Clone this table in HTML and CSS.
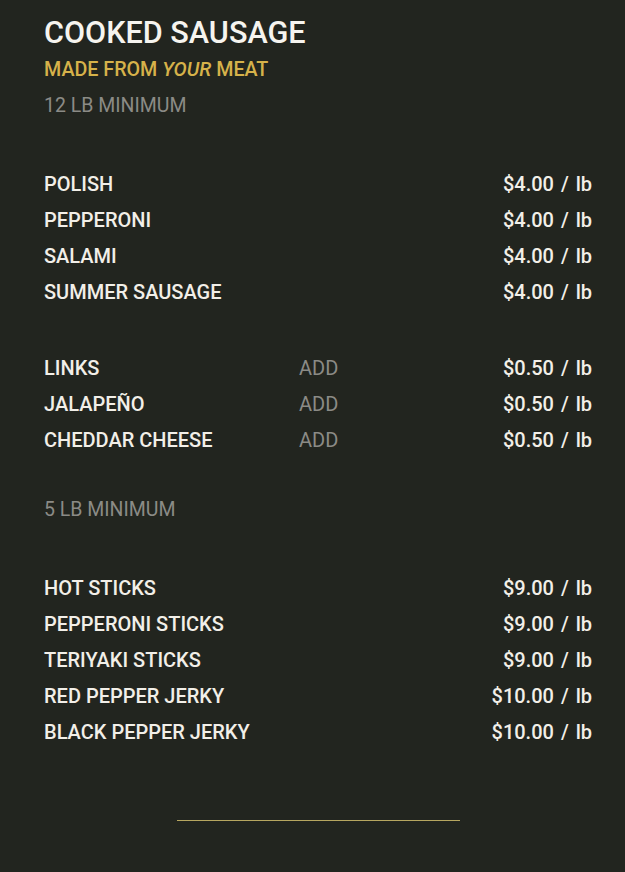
FILE: index.html
```html
<!DOCTYPE html>
<html>
<head>
<meta charset="utf-8">
<link rel="stylesheet" href="styles.css">
</head>
<body>
<main class="menu">
  <header class="head">
    <h1 class="title">COOKED SAUSAGE</h1>
    <p class="sub">MADE FROM <em>YOUR</em> MEAT</p>
    <p class="min">12 LB MINIMUM</p>
  </header>

  <ul class="list first">
    <li class="row"><span class="name">POLISH</span><span class="price">$4.00 / lb</span></li>
    <li class="row"><span class="name">PEPPERONI</span><span class="price">$4.00 / lb</span></li>
    <li class="row"><span class="name">SALAMI</span><span class="price">$4.00 / lb</span></li>
    <li class="row"><span class="name">SUMMER SAUSAGE</span><span class="price">$4.00 / lb</span></li>
  </ul>

  <ul class="list addons">
    <li class="row"><span class="name">LINKS</span><span class="add">ADD</span><span class="price">$0.50 / lb</span></li>
    <li class="row"><span class="name">JALAPEÑO</span><span class="add">ADD</span><span class="price">$0.50 / lb</span></li>
    <li class="row"><span class="name">CHEDDAR CHEESE</span><span class="add">ADD</span><span class="price">$0.50 / lb</span></li>
  </ul>

  <p class="min min2">5 LB MINIMUM</p>

  <ul class="list sticks">
    <li class="row"><span class="name">HOT STICKS</span><span class="price">$9.00 / lb</span></li>
    <li class="row"><span class="name">PEPPERONI STICKS</span><span class="price">$9.00 / lb</span></li>
    <li class="row"><span class="name">TERIYAKI STICKS</span><span class="price">$9.00 / lb</span></li>
    <li class="row"><span class="name">RED PEPPER JERKY</span><span class="price">$10.00 / lb</span></li>
    <li class="row"><span class="name">BLACK PEPPER JERKY</span><span class="price">$10.00 / lb</span></li>
  </ul>

  <div class="rule"></div>
</main>
</body>
</html>
```

FILE: styles.css
```css
html, body {
  margin: 0;
  padding: 0;
  background: #22251f;
}
body {
  width: 625px;
  height: 872px;
  overflow: hidden;
  font-family: Roboto, "DejaVu Sans", sans-serif;
  color: #f3f1ec;
}
.menu {
  padding: 16px 33px 0 44px;
}
.head {
  display: flex;
  flex-direction: column;
}
.title {
  margin: 0;
  font-size: 30.6px;
  line-height: 34px;
  font-weight: 500;
  color: #f6f4ef;
}
.sub {
  margin: 2px 0 0;
  font-size: 19.7px;
  line-height: 36px;
  font-weight: 500;
  color: #d6b24a;
}
.sub em {
  font-style: italic;
}
.min {
  margin: 0;
  font-size: 19.5px;
  line-height: 36px;
  font-weight: 400;
  color: #8b8b86;
}
.list {
  list-style: none;
  margin: 0;
  padding: 0;
}
.first {
  margin-top: 42px;
}
.addons {
  margin-top: 40px;
}
.min2 {
  margin-top: 34px;
}
.sticks {
  margin-top: 42px;
}
.row {
  display: grid;
  grid-template-columns: 255px 1fr auto;
  height: 36px;
  align-items: center;
  font-size: 20px;
  font-weight: 500;
  color: #f2efe8;
}
.name {
  grid-column: 1;
}
.add {
  grid-column: 2;
  color: #8b8b86;
  font-weight: 400;
}
.price {
  grid-column: 3;
  text-align: right;
  word-spacing: 2px;
}
.rule {
  width: 283px;
  height: 1px;
  background: #b7a760;
  margin: 70px 0 0 133px;
}
```
